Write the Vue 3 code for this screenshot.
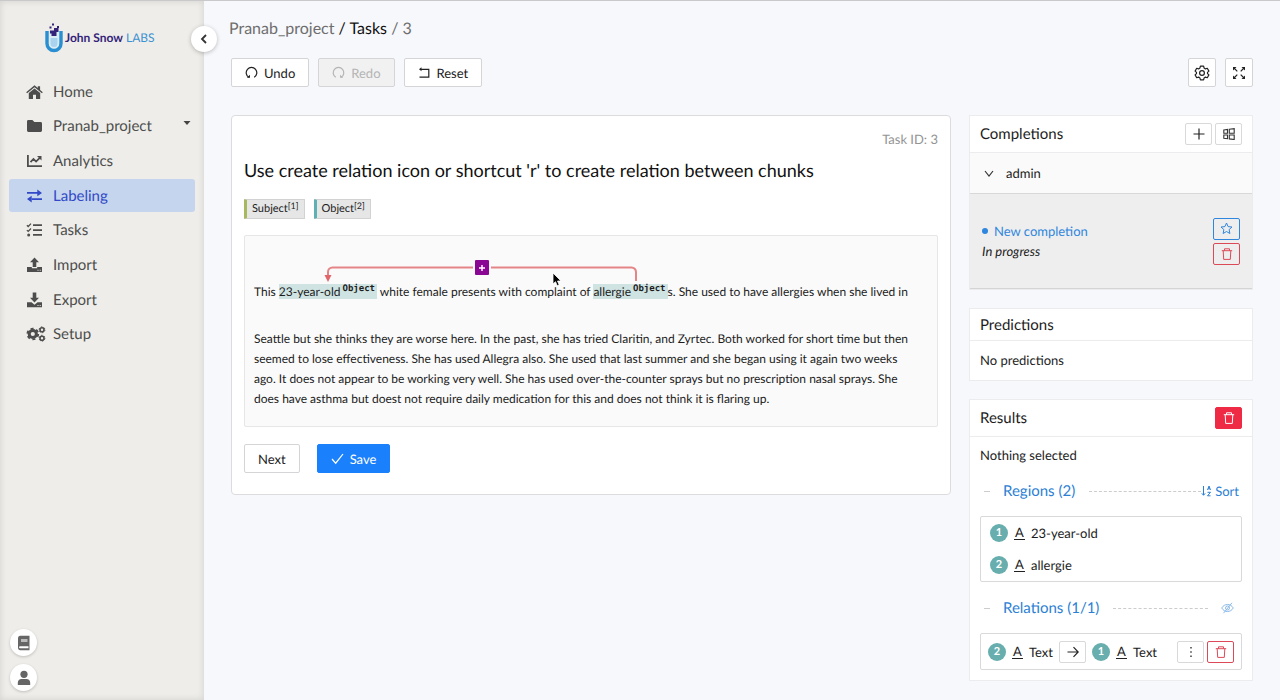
<script setup>
import { ref } from 'vue'

const nav = [
  { id: 'home', label: 'Home' },
  { id: 'folder', label: 'Pranab_project', caret: true },
  { id: 'chart', label: 'Analytics' },
  { id: 'swap', label: 'Labeling', active: true },
  { id: 'tasks', label: 'Tasks' },
  { id: 'import', label: 'Import' },
  { id: 'export', label: 'Export' },
  { id: 'setup', label: 'Setup' }
]

const labels = [
  { name: 'Subject', key: '[1]', tone: 'green' },
  { name: 'Object', key: '[2]', tone: 'teal' }
]

const regions = ref([
  { n: 1, text: '23-year-old' },
  { n: 2, text: 'allergie' }
])
</script>

<template>
  <div class="app">
    <aside class="sidebar">
      <a href="#" class="logo">
        <svg width="18" height="30" viewBox="0 0 18 30" aria-hidden="true">
          <path d="M2 8v12.500a7 7 0 0 0 14 0V8" fill="#dcecf5" stroke="#2a8fd0" stroke-width="3.400" />
          <path d="M5.500 15h7v5.500a3.500 3.500 0 0 1-7 0z" fill="#a9d3ee" />
          <path d="M5 7.500h4v-2.500h4.500v4h-2v4h-5v-2.500h-1.500z" fill="#33247a" />
          <path d="M7 .5h2v2h-2zM4.500 3.500h2v2h-2zM12 3h2v2h-2z" fill="#33247a" />
        </svg>
        <span class="logo-text"><b>John Snow</b> LABS</span>
      </a>
      <button class="collapse" aria-label="Collapse menu">
        <svg width="8" height="10" viewBox="0 0 8 10"><path d="M6 1L2 5l4 4" fill="none" stroke="#333" stroke-width="1.800" /></svg>
      </button>
      <nav>
        <a v-for="n in nav" :key="n.id" href="#" class="nav-item" :class="{ active: n.active }">
          <svg class="nav-icon" width="20" height="16" viewBox="0 0 20 16" fill="currentColor" aria-hidden="true">
            <template v-if="n.id === 'home'">
              <path d="M.2 8.200L8.500 1.300l3.300 2.800V2.200h2.300v3.800l2.700 2.200-.9 1.100-7.400-6.100-7.400 6.100z" />
              <path d="M2.800 9.100L8.500 4.500l5.700 4.600V15H10v-4.200H7V15H2.800z" />
            </template>
            <path v-else-if="n.id === 'folder'" d="M1 3.400A1.400 1.400 0 0 1 2.400 2h4l2 2h6.200A1.400 1.400 0 0 1 16 5.400v7.200a1.400 1.400 0 0 1-1.400 1.400H2.400A1.400 1.400 0 0 1 1 12.600z" />
            <template v-else-if="n.id === 'chart'">
              <path d="M1 2h1.800v10.200H16V14H1z" />
              <path d="M4.500 9.200L7.500 6l2.600 2.600L14 4.700" fill="none" stroke="currentColor" stroke-width="1.800" />
              <path d="M11 3h4.500v4.500z" />
            </template>
            <template v-else-if="n.id === 'swap'">
              <path d="M1 4h10.500v1.800H1zM11.300 1.500L16 4.900l-4.700 3.400zM5.500 10.200H16V12H5.500zM5.700 7.700L1 11.100l4.700 3.400z" />
            </template>
            <template v-else-if="n.id === 'tasks'">
              <path d="M7 2.300h9v1.700H7zM7 7.200h9v1.700H7zM7 12.100h9v1.700H7z" />
              <circle cx="2.700" cy="12.900" r="1.500" />
              <path d="M.9 3.200l1.300 1.300L5 1.600M.9 8.100l1.300 1.300L5 6.500" fill="none" stroke="currentColor" stroke-width="1.300" />
            </template>
            <template v-else-if="n.id === 'import'">
              <path d="M8.500.5L13 5.200h-2.700V10H6.700V5.200H4z" />
              <path d="M1 10h4.800v1.300h5.400V10H16v5H1zM11.500 12.800v1h1v-1zM13.700 12.800v1h1v-1z" fill-rule="evenodd" />
            </template>
            <template v-else-if="n.id === 'export'">
              <path d="M8.500 10.500L4 5.800h2.700V.5h3.600v5.300H13z" />
              <path d="M1 10.300h4.500l3 2.400 3-2.400H16v5H1zM11.500 13v1h1v-1zM13.700 13v1h1v-1z" fill-rule="evenodd" />
            </template>
            <template v-else>
              <circle cx="6.800" cy="8" r="3.600" fill="none" stroke="currentColor" stroke-width="3" />
              <circle cx="6.800" cy="8" r="5.400" fill="none" stroke="currentColor" stroke-width="1.900" stroke-dasharray="3 2.655" />
              <circle cx="16" cy="3.800" r="2" fill="none" stroke="currentColor" stroke-width="1.600" />
              <circle cx="16" cy="3.800" r="2.900" fill="none" stroke="currentColor" stroke-width="1" stroke-dasharray="1.600 1.437" />
              <circle cx="16" cy="12.200" r="2" fill="none" stroke="currentColor" stroke-width="1.600" />
              <circle cx="16" cy="12.200" r="2.900" fill="none" stroke="currentColor" stroke-width="1" stroke-dasharray="1.600 1.437" />
            </template>
          </svg>
          <span>{{ n.label }}</span>
          <svg v-if="n.caret" class="caret" width="8" height="4" viewBox="0 0 8 4"><path d="M.5 0h7L4 4z" fill="#444" /></svg>
        </a>
      </nav>
      <div class="side-foot">
        <button class="round" aria-label="Documentation">
          <svg width="14" height="16" viewBox="0 0 14 16"><path d="M3 .8h9.500v14.400H3a2.200 2.200 0 0 1-2-2.200V3A2.200 2.200 0 0 1 3 .8z" fill="#666" /><path d="M4 4h6.500v3H4z" fill="#bbb" /><path d="M3 11.300h8.500v1.900H3a.95.95 0 0 1 0-1.900z" fill="#fff" /></svg>
        </button>
        <button class="round" aria-label="Account">
          <svg width="14" height="16" viewBox="0 0 14 16" fill="#666"><circle cx="7" cy="4.300" r="3.600" /><path d="M.8 15v-2.300A3.900 3.900 0 0 1 4.700 8.900h4.600a3.900 3.900 0 0 1 3.900 3.800V15z" /></svg>
        </button>
      </div>
    </aside>

    <main>
      <div class="crumbs"><a href="#">Pranab_project</a> <a href="#" class="dark">/ Tasks</a> <span>/ 3</span></div>

      <div class="toolbar">
        <button class="btn">
          <svg width="13" height="13" viewBox="0 0 13 13"><path d="M3.800 11.300A5.300 5.300 0 1 1 9.200 11.300" fill="none" stroke="#222" stroke-width="1.200" /><path d="M1.800 11.800h3.200V8.700z" fill="#222" /></svg>
          Undo
        </button>
        <button class="btn" disabled>
          <svg width="13" height="13" viewBox="0 0 13 13"><path d="M3.800 11.300A5.300 5.300 0 1 1 9.200 11.300" fill="none" stroke="#b4b4b4" stroke-width="1.200" /><path d="M11.200 11.800H8V8.700z" fill="#b4b4b4" /></svg>
          Redo
        </button>
        <button class="btn">
          <svg width="13" height="13" viewBox="0 0 13 13"><path d="M3 3.300h7.800v7.800H1.500" fill="none" stroke="#222" stroke-width="1.200" /><path d="M1 3.300L3.500 1.300v4z" fill="#222" /></svg>
          Reset
        </button>
        <button class="btn square push" aria-label="Settings">
          <svg width="16" height="16" viewBox="0 0 16 16" fill="none" stroke="#222" stroke-width="1.200" stroke-linejoin="round"><path d="M6.400 1.200h3.200l.5 1.900 1.300.8 1.900-.6 1.600 2.800-1.400 1.300v1.200l1.400 1.300-1.600 2.800-1.900-.6-1.300.8-.5 1.900H6.400l-.5-1.900-1.300-.8-1.900.6-1.600-2.800 1.400-1.300V7.400L1.100 6.100l1.600-2.800 1.900.6 1.300-.8z" /><circle cx="8" cy="8" r="2.400" /></svg>
        </button>
        <button class="btn square" aria-label="Fullscreen">
          <svg width="14" height="14" viewBox="0 0 14 14" fill="#222"><path d="M1 1h3.500L1 4.500zM13 1v3.500L9.500 1zM1 13V9.500L4.500 13zM13 13H9.500L13 9.500z" /><path d="M2 2l3.300 3.300M12 2L8.700 5.300M2 12l3.300-3.300M12 12L8.700 8.700" stroke="#222" stroke-width="1.200" /></svg>
        </button>
      </div>

      <div class="columns">
        <section class="card">
          <div class="task-id">Task ID: 3</div>
          <h1>Use create relation icon or shortcut 'r' to create relation between chunks</h1>
          <div class="tags">
            <button v-for="l in labels" :key="l.name" class="tag" :class="l.tone">{{ l.name }}<sup>{{ l.key }}</sup></button>
          </div>
          <div class="text-box">
            <svg class="arc" width="400" height="50" viewBox="0 0 400 50" aria-hidden="true">
              <path d="M391 45V36a4.500 4.500 0 0 0-4.500-4.500H87.500A4.500 4.500 0 0 0 83 36v4" fill="none" stroke="#e58487" stroke-width="2" />
              <path d="M79.500 39h7L83 46z" fill="#e0666b" />
            </svg>
            <button class="arc-plus" aria-label="Add relation label">
              <svg width="8" height="8" viewBox="0 0 8 8"><path d="M4 1v6M1 4h6" stroke="#fff" stroke-width="1.400" /></svg>
            </button>
            <p class="first">This <mark>23-year-old<sup>Object</sup></mark> white female presents with complaint of <mark>allergie<sup>Object</sup></mark>s. She used to have allergies when she lived in</p>
            <p>Seattle but she thinks they are worse here. In the past, she has tried Claritin, and Zyrtec. Both worked for short time but then<br>seemed to lose effectiveness. She has used Allegra also. She used that last summer and she began using it again two weeks<br>ago. It does not appear to be working very well. She has used over-the-counter sprays but no prescription nasal sprays. She<br>does have asthma but doest not require daily medication for this and does not think it is flaring up.</p>
            <svg class="cursor" width="10" height="15" viewBox="0 0 10 15" aria-hidden="true"><path d="M1 1v11l2.500-2.300 1.700 4 2-.9-1.700-3.800H9z" fill="#000" stroke="#fff" stroke-width=".8" /></svg>
          </div>
          <div class="actions">
            <button class="btn">Next</button>
            <button class="btn primary">
              <svg width="13" height="13" viewBox="0 0 13 13"><path d="M1 7l3.700 4.200L12 2" fill="none" stroke="#fff" stroke-width="1.200" /></svg>
              Save
            </button>
          </div>
        </section>

        <div class="side">
          <section class="panel">
            <header>
              <h2>Completions</h2>
              <span class="pair">
                <button class="mini" aria-label="Add completion"><svg width="12" height="12" viewBox="0 0 12 12"><path d="M6 .5v11M.5 6h11" stroke="#222" stroke-width="1.200" /></svg></button>
                <button class="mini" aria-label="Compare completions"><svg width="12" height="12" viewBox="0 0 12 12" fill="none" stroke="#333" stroke-width="1.100"><path d="M.8 2l3.700-.5v3.700H.8zM6.300 1.300l4.900-.6v4.500H6.300zM.8 7h3.700v3.700l-3.700-.5zM6.300 7h4.900v4.500l-4.900-.6z" /></svg></button>
              </span>
            </header>
            <button class="user-row">
              <svg width="10" height="7" viewBox="0 0 10 7"><path d="M1 1l4 5 4-5" fill="none" stroke="#333" stroke-width="1.200" /></svg>
              admin
            </button>
            <div class="completion">
              <div>
                <div class="new"><i class="dot"></i>New completion</div>
                <em>In progress</em>
              </div>
              <span class="stack">
                <button class="mini blue" aria-label="Star"><svg width="13" height="13" viewBox="0 0 13 13"><path d="M6.500 1l1.600 3.600 3.900.4-2.900 2.600.8 3.900-3.400-2-3.400 2 .8-3.900L1 5l3.900-.4z" fill="none" stroke="#2f86dd" stroke-linejoin="round" /></svg></button>
                <button class="mini red" aria-label="Delete completion"><svg width="12" height="12" viewBox="0 0 12 12"><path d="M.8 2.700h10.400M3.500 2.700V.8h5v1.900M2.200 2.700l.5 8.700h6.600l.5-8.700" fill="none" stroke="#dc4a58" /></svg></button>
              </span>
            </div>
          </section>

          <section class="panel">
            <header class="low"><h2>Predictions</h2></header>
            <div class="none">No predictions</div>
          </section>

          <section class="panel">
            <header>
              <h2>Results</h2>
              <button class="mini solid" aria-label="Delete all regions"><svg width="12" height="12" viewBox="0 0 12 12"><path d="M.8 2.700h10.400M3.500 2.700V.8h5v1.900M2.200 2.700l.5 8.700h6.600l.5-8.700" fill="none" stroke="#fff" /></svg></button>
            </header>
            <div class="results">
              <div>Nothing selected</div>
              <div class="divider">
                <i class="dash short"></i><h3>Regions (2)</h3><i class="dash"></i>
                <button class="link">
                  <svg width="11" height="12" viewBox="0 0 11 12" fill="none" stroke="#2b80d4"><path d="M2.500 1v9M.8 8.300l1.700 2 1.700-2M6.500 5L8 1l1.500 4M7 3.800h2M6.500 7.300h3l-3 3.500h3" /></svg>
                  Sort
                </button>
              </div>
              <ul class="regions">
                <li v-for="r in regions" :key="r.n"><b class="num">{{ r.n }}</b><span class="letter">A</span>{{ r.text }}</li>
              </ul>
              <div class="divider relations">
                <i class="dash short"></i><h3>Relations (1/1)</h3><i class="dash"></i>
                <button class="link eye" aria-label="Hide relations">
                  <svg width="13" height="12" viewBox="0 0 13 12" fill="none" stroke="#8ab9e8"><path d="M.7 6C3.500 1.300 9.500 1.300 12.300 6 9.500 10.700 3.500 10.700.7 6zM11 .8L2.500 11.200" /><circle cx="6.500" cy="6" r="2" /></svg>
                </button>
              </div>
              <div class="relation">
                <b class="num">2</b><span class="letter">A</span><span>Text</span>
                <button class="mini arrow" aria-label="Change direction"><svg width="12" height="12" viewBox="0 0 12 12"><path d="M.5 6h10.500M6.500 1.200L11.200 6l-4.700 4.800" fill="none" stroke="#222" stroke-width="1.200" /></svg></button>
                <b class="num">1</b><span class="letter">A</span><span>Text</span>
                <span class="pair end">
                  <button class="mini" aria-label="More"><svg width="4" height="12" viewBox="0 0 4 12" fill="#333"><path d="M1.300 1h1.400v1.400H1.300zM1.300 5.300h1.400v1.400H1.300zM1.300 9.600h1.400V11H1.300z" /></svg></button>
                  <button class="mini red" aria-label="Delete relation"><svg width="12" height="12" viewBox="0 0 12 12"><path d="M.8 2.700h10.400M3.500 2.700V.8h5v1.900M2.200 2.700l.5 8.700h6.600l.5-8.700" fill="none" stroke="#dc4a58" /></svg></button>
                </span>
              </div>
            </div>
          </section>
        </div>
      </div>
    </main>
  </div>
</template>

<style>
body {
  background: #f7f8fc;
}
</style>

<style scoped>
* {
  box-sizing: border-box;
}
.app {
  display: flex;
  min-height: 100vh;
  border-top: 1px solid #c9c9cb;
  font: 13px/20px Lato, "Liberation Sans", sans-serif;
  text-rendering: geometricPrecision;
  color: #1c1c1c;
}
button {
  font: inherit;
  color: inherit;
  text-rendering: inherit;
  cursor: pointer;
}
a {
  color: inherit;
  text-decoration: none;
}
h1, h2, h3, p, ul {
  margin: 0;
  padding: 0;
  font-weight: 400;
}
svg {
  flex: none;
}
.sidebar {
  position: relative;
  flex: none;
  width: 204px;
  display: flex;
  flex-direction: column;
  padding: 22px 9px 9px;
  background: #eeede9;
  box-shadow: inset 0 0 7px rgba(0, 0, 0, 0.12);
}
.logo {
  display: flex;
  align-items: center;
  gap: 2px;
  height: 30px;
  margin-left: 36px;
}
.logo-text {
  color: #3c92d2;
  font-size: 12px;
  white-space: nowrap;
}
.logo-text b {
  color: #33247a;
}
.collapse {
  position: absolute;
  top: 25px;
  right: -13px;
  width: 26px;
  height: 26px;
  display: grid;
  place-items: center;
  padding: 0;
  border: 0;
  border-radius: 50%;
  background: #fff;
  box-shadow: 0 1px 4px rgba(0, 0, 0, 0.25);
}
nav {
  display: flex;
  flex-direction: column;
  justify-content: space-between;
  height: 276px;
  margin-top: 22px;
}
.nav-item {
  display: flex;
  align-items: center;
  height: 33px;
  padding: 0 4px 0 17px;
  border-radius: 3px;
  font-size: 15px;
  color: #4d4d4d;
}
.nav-icon {
  margin-right: 7px;
}
.nav-item.active {
  background: #c4d5ed;
  color: #3148c8;
}
.caret {
  margin: 0 0 6px auto;
}
.side-foot {
  display: flex;
  flex-direction: column;
  gap: 8px;
  margin: auto 0 0 1px;
}
.round {
  width: 27px;
  height: 27px;
  display: grid;
  place-items: center;
  padding: 0;
  border: 0;
  border-radius: 50%;
  background: #fff;
  box-shadow: 0 1px 3px rgba(0, 0, 0, 0.2);
}
main {
  flex: 1;
  min-width: 0;
  padding: 16px 27px 18px;
}
.crumbs {
  margin-left: -2px;
  font-size: 16px;
  line-height: 24px;
  color: #6e6e6e;
}
.dark {
  color: #111;
}
.toolbar {
  display: flex;
  gap: 9px;
  margin: 17px 0 28px;
}
.btn {
  height: 29px;
  display: flex;
  align-items: center;
  gap: 6px;
  padding: 0 13px;
  border: 1px solid #d5d5d7;
  border-radius: 2px;
  background: #fff;
}
.btn:disabled {
  background: #f1f1f2;
  color: #b4b4b4;
}
.square {
  width: 28px;
  padding: 0;
  justify-content: center;
}
.push {
  margin-left: auto;
}
.primary {
  background: #1b80fb;
  border-color: #1b80fb;
  color: #fff;
}
.columns {
  display: flex;
  align-items: flex-start;
  gap: 18px;
}
.card {
  flex: 1;
  min-width: 0;
  padding: 13px 12px 21px;
  border: 1px solid #dcdcde;
  border-radius: 4px;
  background: #fff;
}
.task-id {
  text-align: right;
  color: #949494;
}
h1 {
  margin-top: 7px;
  font-size: 18px;
  line-height: 28px;
  color: #111;
}
.tags {
  display: flex;
  gap: 9px;
  margin: 15px 0 16px;
}
.tag {
  height: 20px;
  padding: 0 5px;
  border: 1px solid #d2d2d2;
  border-left: 3px solid;
  border-radius: 1px;
  background: #e6e6e6;
  font-size: 11px;
  line-height: 18px;
}
.tag sup {
  font-size: 9px;
  line-height: 0;
  vertical-align: 3px;
}
.tag.green {
  border-left-color: #a6b95c;
}
.tag.teal {
  border-left-color: #5fb0b2;
}
.text-box {
  position: relative;
  padding: 46px 9px 17px;
  border: 1px solid #e6e6e6;
  border-radius: 2px;
  background: #fafafa;
  font-size: 12px;
  font-weight: 500;
}
.first {
  margin-bottom: 27px;
}
mark {
  background: #cfe3e2;
  color: inherit;
}
mark sup {
  padding: 0 2px;
  font: bold 9px/1 "DejaVu Sans Mono", monospace;
  line-height: 0;
}
.arc {
  position: absolute;
  top: 0;
  left: 0;
}
.arc-plus {
  position: absolute;
  top: 24px;
  left: 230px;
  width: 14px;
  height: 15px;
  display: grid;
  place-items: center;
  padding: 0;
  border: 0;
  border-radius: 1px;
  background: #8a0794;
  box-shadow: 0 0 0 2px #fafafa;
}
.cursor {
  position: absolute;
  top: 36px;
  left: 307px;
}
.actions {
  display: flex;
  gap: 17px;
  margin-top: 17px;
}
.side {
  flex: none;
  width: 284px;
  display: flex;
  flex-direction: column;
  gap: 18px;
}
.panel {
  border: 1px solid #ececee;
  background: #fff;
}
header {
  display: flex;
  align-items: center;
  justify-content: space-between;
  height: 37px;
  padding: 0 10px;
  border-bottom: 1px solid #ececee;
}
.low {
  height: 32px;
}
h2 {
  font-size: 15px;
}
.pair {
  display: flex;
  gap: 3px;
}
.mini {
  width: 27px;
  height: 22px;
  display: grid;
  place-items: center;
  padding: 0;
  border: 1px solid #d9d9d9;
  border-radius: 2px;
  background: #fff;
}
.mini.blue {
  border-color: #2f86dd;
  background: transparent;
}
.mini.red {
  border-color: #dc4a58;
  background: transparent;
}
.mini.solid {
  border-color: #ee2a45;
  background: #ee2a45;
}
.user-row {
  display: flex;
  align-items: center;
  gap: 12px;
  width: 100%;
  height: 41px;
  padding: 0 14px;
  border: 0;
  border-bottom: 1px solid #d8d8d8;
  background: #fafafa;
}
.completion {
  display: flex;
  align-items: center;
  justify-content: space-between;
  height: 95px;
  padding: 0 12px;
  background: #eee;
  border-bottom: 1px solid #d4d4d4;
}
.new {
  display: flex;
  align-items: center;
  gap: 6px;
  color: #2f86dd;
}
.dot {
  width: 6px;
  height: 6px;
  border-radius: 50%;
  background: #2f86dd;
}
.stack {
  display: flex;
  flex-direction: column;
  gap: 3px;
}
.none {
  padding: 9px 10px 10px;
}
.results {
  padding: 8px 10px 10px;
}
.divider {
  display: flex;
  align-items: center;
  margin: 15px 3px 14px 4px;
  color: #2b80d4;
}
h3 {
  margin: 0 14px 0 13px;
  font-size: 15px;
  line-height: 22px;
}
.dash {
  flex: 1;
  border-top: 1px dashed #ccc;
}
.short {
  flex: none;
  width: 6px;
}
.link {
  display: flex;
  align-items: center;
  gap: 3px;
  padding: 0;
  border: 0;
  background: none;
}
.eye {
  margin: 0 5px 0 13px;
}
.regions {
  list-style: none;
  border: 1px solid #d9d9d9;
  border-radius: 2px;
}
.regions li {
  display: flex;
  align-items: center;
  gap: 6px;
  height: 32px;
  padding: 0 9px;
}
.num {
  width: 18px;
  height: 18px;
  border-radius: 50%;
  background: #68aeae;
  color: #fff;
  font-size: 11px;
  line-height: 18px;
  text-align: center;
}
.letter {
  width: 11px;
  border-bottom: 1px solid #222;
  line-height: 13px;
  text-align: center;
}
.relation {
  display: flex;
  align-items: center;
  gap: 6px;
  height: 37px;
  padding: 0 7px;
  border: 1px solid #d9d9d9;
  border-radius: 2px;
}
.end {
  margin-left: auto;
}
</style>
